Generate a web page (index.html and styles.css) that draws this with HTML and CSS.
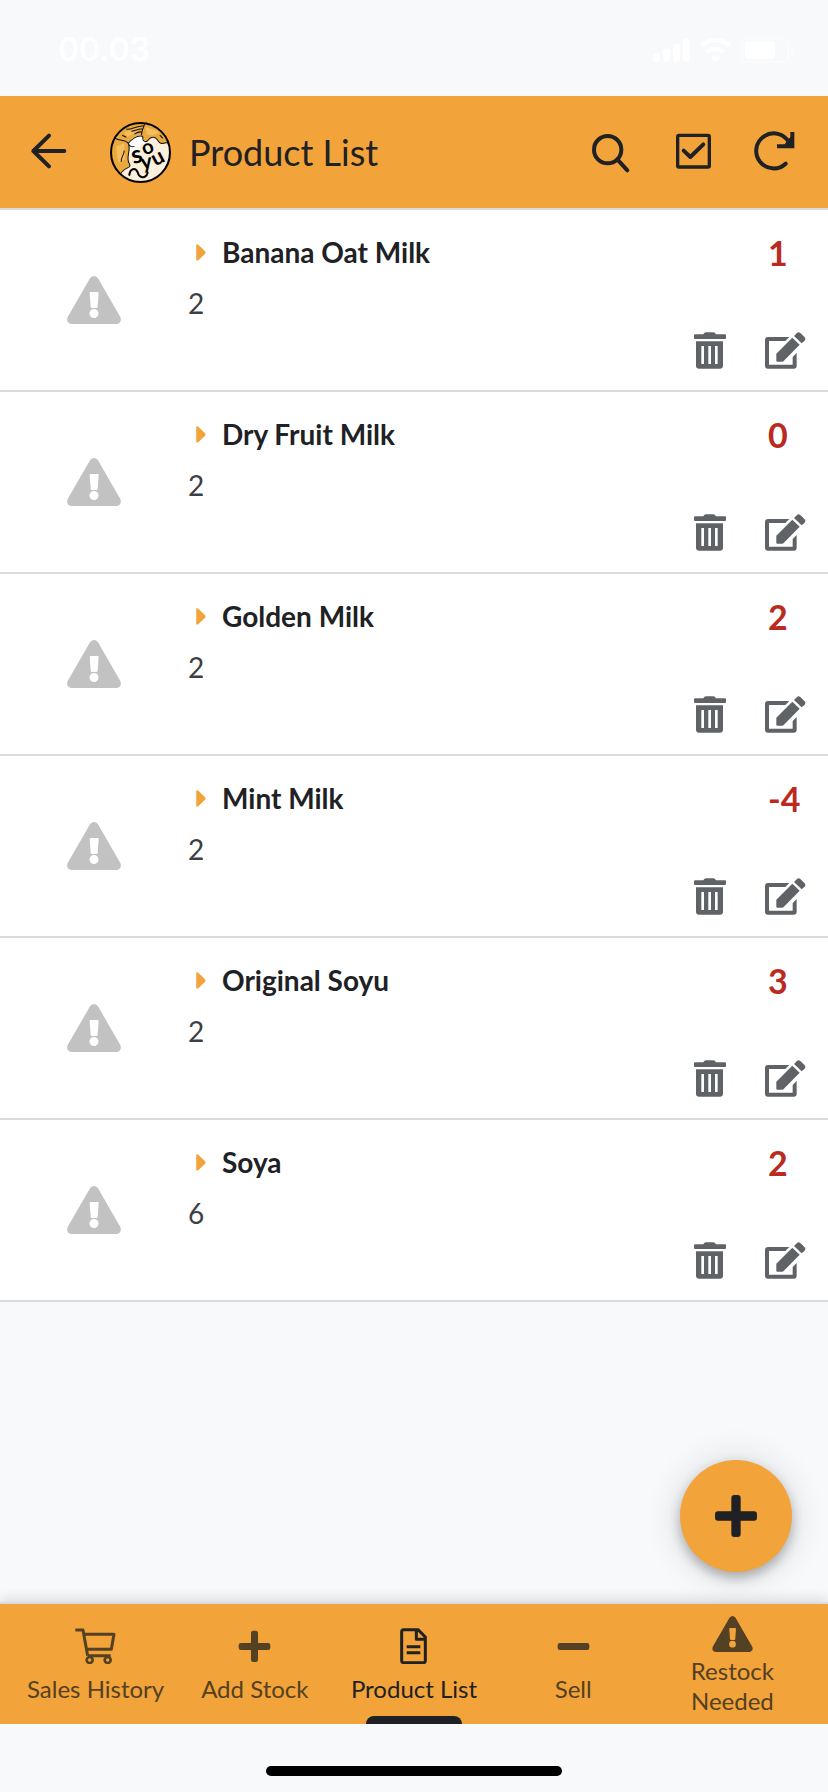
FILE: index.html
```html
<!DOCTYPE html>
<html lang="en">
<head>
<meta charset="utf-8">
<meta name="viewport" content="width=device-width, initial-scale=1">
<title>Product List</title>
<link rel="stylesheet" href="styles.css">
</head>
<body>
<svg class="sprite" aria-hidden="true">
  <symbol id="warning" viewBox="0 0 162 144">
    <path fill-rule="evenodd" d="M69 7Q81-7 93 7L160 123Q166 141 149 144H13Q-4 141 2 123ZM68 51L71 93Q72 96 75 96H88Q91 96 92 93L95 51Q95 48 92 48H71Q68 48 68 51ZM81 99A13.500 13.500 0 1 0 81 126A13.500 13.500 0 1 0 81 99Z"/>
  </symbol>
  <symbol id="caret" viewBox="0 0 28 50">
    <path d="M0 4Q1-1 6 2L26 21Q29 25 26 29L6 48Q1 51 0 46Z"/>
  </symbol>
  <symbol id="trash" viewBox="0 0 96 111">
    <path d="M3 7H28Q31 1 36 1H58Q63 1 66 7H93Q96 7 96 10V18Q96 21 93 21H3Q0 21 0 18V10Q0 7 3 7Z"/>
    <path fill-rule="evenodd" d="M6 28H87V102Q86 110 78 110H15Q7 110 6 102ZM22 42V96H30V42ZM43 42V96H51V42ZM63 42V96H71V42Z"/>
  </symbol>
  <symbol id="edit" viewBox="0 0 123 111">
    <path d="M73 15H9Q0 15 0 24V101Q0 110 9 110H86Q95 110 95 101V63L83 75V98H12V27H61Z"/>
    <path d="M34 65L82 17L104 38L56 87Q54 89 51 89H37Q34 89 34 86Z"/>
    <path d="M87 12L96 3Q101-1 106 3L119 16Q123 21 119 26L110 34Z"/>
  </symbol>
</svg>

<div class="app">
  <div class="status">
    <span class="status-time">00.03</span>
    <svg class="status-icons" viewBox="276 106 432 84" aria-hidden="true">
      <rect x="279" y="156" width="21" height="27" rx="6"/>
      <rect x="309" y="144" width="21" height="39" rx="6"/>
      <rect x="339" y="129" width="21" height="54" rx="6"/>
      <rect x="369" y="114" width="21" height="69" rx="6"/>
      <path class="wave" d="M423 135Q466 101 509 135M441 155Q466 134 491 155"/>
      <path d="M452 171Q466 158 481 171L466 184Z"/>
      <rect class="cell" x="546" y="114" width="139" height="70" rx="18"/>
      <rect x="555" y="123" width="90" height="51" rx="9"/>
      <path class="cap" d="M693 138Q701 141 701 149Q701 157 693 160Z"/>
    </svg>
  </div>

  <header class="header">
    <button class="icon-btn back" type="button" aria-label="Back">
      <svg class="icon line" viewBox="72 384 144 144"><path d="M193 453H100M147 407L100 453L147 499"/></svg>
    </button>
    <svg class="logo" viewBox="0 0 60 60" role="img" aria-label="Soyu">
      <defs><clipPath id="disc"><circle cx="30" cy="30" r="29"/></clipPath></defs>
      <g clip-path="url(#disc)">
        <rect width="60" height="60" fill="#fcefdb"/>
        <path fill="#e9a93c" d="M0 0H60V20C54 19 54 23 50 21C46 19 47 14 42 15C37 16 38 21 34 18C31 16 33 14 31 13C26 13 20 16 18 21C21 28 16 34 19 41C22 44 15 45 10 52L0 52Z"/>
        <path fill="#f5bd5e" d="M6 24L14 21L15 37L8 40ZM14 10L27 6L27 9L17 15ZM35 5L49 10L43 13L36 12Z"/>
        <path fill="#fff" d="M18 21C23 14 30 12 33 17L35 20L28 24L22 30L19 32C20 27 21 25 18 21Z"/>
        <path class="ink" d="M10 52C13 44 22 46 19 41C15 35 21 29 18 21C23 15 28 13 32 14C33 16 31 18 34 19C38 21 37 15 42 15C47 14 46 20 50 21C54 22 54 19 59 21M5 16C10 19 15 17 18 21M18 21C19 24 22 25 24 24M31 13C31 8 33 6 34 2M16 7C21 8 27 3 33 4M21 9C25 9 28 6 32 7M24 12C27 10 29 9 32 10M12 13L16 15M49 13L52 16M14 28C14 32 11 34 11 39"/>
      </g>
      <g class="logo-text">
        <text transform="translate(28 40) rotate(-14)" font-size="24">s</text>
        <text transform="translate(39 31) rotate(-20)" font-size="20">o</text>
        <text transform="translate(37 46) rotate(-10)" font-size="21">y</text>
        <text transform="translate(50 41) rotate(-28)" font-size="21">u</text>
      </g>
      <path class="swash" d="M19 52C20 45 25 45 27 49C29 56 35 56 37 50"/>
      <circle class="rim" cx="30" cy="30" r="29"/>
    </svg>
    <h1 class="heading">Product List</h1>
    <button class="icon-btn" type="button" aria-label="Search">
      <svg class="icon line" viewBox="81 384 144 144"><circle cx="143" cy="449" r="41"/><path d="M172 478L202 511"/></svg>
    </button>
    <button class="icon-btn" type="button" aria-label="Select">
      <svg class="icon line" viewBox="327 384 144 144"><rect x="353" y="406" width="95" height="95" rx="4"/><path d="M371 452L391 471L430 433"/></svg>
    </button>
    <button class="icon-btn" type="button" aria-label="Refresh">
      <svg class="icon line" viewBox="573 384 144 144"><path d="M677 491A52.500 52.500 0 1 1 687 427"/><path class="square" d="M697 396V439H651"/><path class="solid" d="M681 425L692 412V434H676Z"/></svg>
    </button>
  </header>

  <main class="main">
    <ul class="list">
      <li class="row">
        <div class="thumb"><svg class="warn"><use href="#warning"/></svg></div>
        <div class="info"><h2 class="name"><svg class="caret"><use href="#caret"/></svg>Banana Oat Milk</h2><p class="sub">2</p></div>
        <div class="side"><span class="qty">1</span><div class="actions"><button class="action" type="button" aria-label="Delete Banana Oat Milk"><svg class="trash"><use href="#trash"/></svg></button><button class="action" type="button" aria-label="Edit Banana Oat Milk"><svg class="edit"><use href="#edit"/></svg></button></div></div>
      </li>
      <li class="row">
        <div class="thumb"><svg class="warn"><use href="#warning"/></svg></div>
        <div class="info"><h2 class="name"><svg class="caret"><use href="#caret"/></svg>Dry Fruit Milk</h2><p class="sub">2</p></div>
        <div class="side"><span class="qty">0</span><div class="actions"><button class="action" type="button" aria-label="Delete Dry Fruit Milk"><svg class="trash"><use href="#trash"/></svg></button><button class="action" type="button" aria-label="Edit Dry Fruit Milk"><svg class="edit"><use href="#edit"/></svg></button></div></div>
      </li>
      <li class="row">
        <div class="thumb"><svg class="warn"><use href="#warning"/></svg></div>
        <div class="info"><h2 class="name"><svg class="caret"><use href="#caret"/></svg>Golden Milk</h2><p class="sub">2</p></div>
        <div class="side"><span class="qty">2</span><div class="actions"><button class="action" type="button" aria-label="Delete Golden Milk"><svg class="trash"><use href="#trash"/></svg></button><button class="action" type="button" aria-label="Edit Golden Milk"><svg class="edit"><use href="#edit"/></svg></button></div></div>
      </li>
      <li class="row">
        <div class="thumb"><svg class="warn"><use href="#warning"/></svg></div>
        <div class="info"><h2 class="name"><svg class="caret"><use href="#caret"/></svg>Mint Milk</h2><p class="sub">2</p></div>
        <div class="side"><span class="qty">-4</span><div class="actions"><button class="action" type="button" aria-label="Delete Mint Milk"><svg class="trash"><use href="#trash"/></svg></button><button class="action" type="button" aria-label="Edit Mint Milk"><svg class="edit"><use href="#edit"/></svg></button></div></div>
      </li>
      <li class="row">
        <div class="thumb"><svg class="warn"><use href="#warning"/></svg></div>
        <div class="info"><h2 class="name"><svg class="caret"><use href="#caret"/></svg>Original Soyu</h2><p class="sub">2</p></div>
        <div class="side"><span class="qty">3</span><div class="actions"><button class="action" type="button" aria-label="Delete Original Soyu"><svg class="trash"><use href="#trash"/></svg></button><button class="action" type="button" aria-label="Edit Original Soyu"><svg class="edit"><use href="#edit"/></svg></button></div></div>
      </li>
      <li class="row">
        <div class="thumb"><svg class="warn"><use href="#warning"/></svg></div>
        <div class="info"><h2 class="name"><svg class="caret"><use href="#caret"/></svg>Soya</h2><p class="sub">6</p></div>
        <div class="side"><span class="qty">2</span><div class="actions"><button class="action" type="button" aria-label="Delete Soya"><svg class="trash"><use href="#trash"/></svg></button><button class="action" type="button" aria-label="Edit Soya"><svg class="edit"><use href="#edit"/></svg></button></div></div>
      </li>
    </ul>
    <button class="fab" type="button" aria-label="Add product">
      <svg class="fab-icon" viewBox="0 0 126 126"><rect x="49" y="0" width="28" height="126" rx="9"/><rect x="0" y="49" width="126" height="28" rx="9"/></svg>
    </button>
  </main>

  <nav class="tabs">
    <a class="tab" href="#history">
      <svg class="tab-icon cart" viewBox="225 114 123 108"><path d="M226 120H249L263 197M252 133H342L334 178H260M264 197H332"/><circle cx="269" cy="210" r="9"/><circle cx="323" cy="210" r="9"/></svg>
      <span>Sales History</span>
    </a>
    <a class="tab" href="#add">
      <svg class="tab-icon" viewBox="703 114 123 108"><rect x="754" y="122" width="21" height="94" rx="7"/><rect x="717" y="159" width="95" height="21" rx="7"/></svg>
      <span>Add Stock</span>
    </a>
    <a class="tab active" href="#products" aria-current="page">
      <svg class="tab-icon doc" viewBox="1179 114 123 108"><path d="M1211 119H1254L1276 141V212Q1276 218 1270 218H1211Q1205 218 1205 212V125Q1205 119 1211 119ZM1249 119V148H1276M1220 170H1261M1220 188H1261"/></svg>
      <span>Product List</span>
    </a>
    <a class="tab" href="#sell">
      <svg class="tab-icon" viewBox="415 114 123 108"><rect x="429" y="159" width="95" height="21" rx="7"/></svg>
      <span>Sell</span>
    </a>
    <a class="tab tall" href="#restock">
      <svg class="tab-icon"><use href="#warning"/></svg>
      <span>Restock Needed</span>
    </a>
  </nav>
  <div class="home"><div class="home-bar"></div></div>
</div>
</body>
</html>
```
FILE: styles.css
```css
* {
  box-sizing: border-box;
}

body {
  margin: 0;
  background: #f8f9fb;
  color: #202124;
  font-family: Lato, "Liberation Sans", sans-serif;
}

button {
  padding: 0;
  border: 0;
  background: none;
  color: inherit;
  font: inherit;
  cursor: pointer;
}

svg {
  display: block;
  flex: none;
  fill: currentColor;
}

.sprite {
  position: absolute;
  width: 0;
  height: 0;
}

.app {
  display: flex;
  flex-direction: column;
  min-height: 100vh;
}

/* Status bar */
.status {
  display: flex;
  align-items: center;
  justify-content: space-between;
  height: 96px;
  padding: 4px 32px 0 58px;
  color: #fff;
}

.status-time {
  font-family: Inter, sans-serif;
  font-size: 32px;
  font-weight: 600;
  line-height: 40px;
}

.status-icons {
  width: 144px;
  height: 28px;
}

.wave {
  fill: none;
  stroke: #fff;
  stroke-width: 13;
}

.cell {
  fill: none;
  stroke: #fcfcfd;
  stroke-width: 4;
}

.cap {
  fill: #fcfcfd;
}

/* Header */
.header {
  display: flex;
  align-items: center;
  height: 114px;
  padding-right: 12px;
  border-bottom: 2px solid #dadce0;
  background: #f2a33a;
}

.icon-btn {
  display: flex;
  align-items: center;
  justify-content: center;
  width: 82px;
  height: 82px;
}

.back {
  width: 96px;
}

.icon {
  width: 48px;
  height: 48px;
}

.line {
  fill: none;
  stroke: currentColor;
  stroke-width: 12;
  stroke-linecap: round;
  stroke-linejoin: round;
}

.line rect {
  stroke-width: 10;
}

.line .square {
  stroke-linecap: butt;
  stroke-linejoin: miter;
}

.line .solid {
  fill: currentColor;
  stroke-width: 3;
}

.logo {
  width: 61px;
  height: 61px;
  margin-left: 14px;
}

.ink {
  fill: none;
  stroke: #111;
  stroke-width: 1;
}

.logo-text {
  fill: #000;
  font-weight: 700;
  text-anchor: middle;
}

.swash {
  fill: none;
  stroke: #000;
  stroke-width: 2;
  stroke-linecap: round;
}

.rim {
  fill: none;
  stroke: #000;
  stroke-width: 2;
}

.heading {
  flex: 1;
  margin: 0 0 0 18px;
  font-size: 36px;
  font-weight: 400;
  line-height: 44px;
}

/* Product list */
.main {
  position: relative;
  flex: 1;
}

.list {
  margin: 0;
  padding: 0;
  list-style: none;
}

.row {
  display: flex;
  border-bottom: 2px solid #dadce0;
  background: #fff;
}

.thumb {
  display: flex;
  align-items: center;
  justify-content: center;
  width: 188px;
  color: #c2c2c2;
}

.warn {
  width: 54px;
  height: 48px;
}

.info {
  display: flex;
  flex: 1;
  flex-direction: column;
  gap: 11px;
  padding-top: 22px;
}

.name {
  display: flex;
  align-items: center;
  gap: 16px;
  margin: 0;
  padding-left: 8px;
  font-size: 28px;
  font-weight: 700;
  line-height: 40px;
}

.caret {
  width: 10px;
  height: 17px;
  color: #f2a33a;
}

.sub {
  margin: 0;
  color: #3c4043;
  font-size: 28px;
  line-height: 40px;
}

.side {
  display: flex;
  flex-direction: column;
  align-items: flex-end;
  gap: 59px;
  padding: 23px 22px 21px 0;
}

.qty {
  width: 38px;
  color: #bb2a20;
  font-size: 34px;
  font-weight: 700;
  line-height: 40px;
}

.actions {
  display: flex;
  gap: 39px;
  color: #5f6368;
}

.trash {
  width: 32px;
  height: 37px;
}

.edit {
  width: 41px;
  height: 37px;
}

.fab {
  position: absolute;
  right: 36px;
  bottom: 30px;
  display: flex;
  align-items: center;
  justify-content: center;
  width: 112px;
  height: 112px;
  border-radius: 50%;
  background: #f2a33a;
  box-shadow: 0 6px 12px rgba(32, 33, 36, 0.3), 0 2px 36px rgba(32, 33, 36, 0.16);
}

.fab-icon {
  width: 42px;
  height: 42px;
}

/* Bottom navigation */
.tabs {
  display: grid;
  grid-template-columns: repeat(5, minmax(0, 1fr));
  height: 122px;
  padding: 0 16px;
  border-top: 2px solid #dadce0;
  background: #f2a33a;
  box-shadow: 0 -2px 12px rgba(32, 33, 36, 0.16);
}

.tab {
  position: relative;
  display: flex;
  flex-direction: column;
  align-items: center;
  justify-content: center;
  gap: 10px;
  padding-top: 4px;
  color: #544022;
  font-size: 24px;
  line-height: 30px;
  text-align: center;
  text-decoration: none;
}

.tall {
  gap: 4px;
  padding-right: 16px;
  padding-left: 16px;
}

.active {
  color: #202124;
}

.active::after {
  content: "";
  position: absolute;
  bottom: 0;
  width: 96px;
  height: 8px;
  border-radius: 8px 8px 0 0;
  background: #202124;
}

.tab-icon {
  width: 41px;
  height: 36px;
}

.cart,
.doc {
  fill: none;
  stroke: currentColor;
  stroke-width: 9;
  stroke-linejoin: round;
}

.cart circle {
  stroke-width: 8;
}

.home {
  display: flex;
  justify-content: center;
  height: 68px;
  padding-top: 42px;
  background: #f8f9fb;
}

.home-bar {
  width: 296px;
  height: 10px;
  border-radius: 5px;
  background: #000;
}
```
